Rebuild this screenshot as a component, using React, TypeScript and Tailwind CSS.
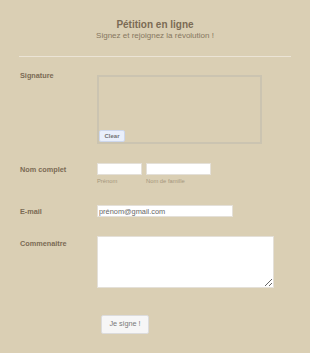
import React from 'react';

function Label({ children, className = '' }: { children: React.ReactNode; className?: string }) {
  return (
    <div className={`w-[77px] shrink-0 text-[7.3px] font-bold leading-[9px] text-[#7b6b55] ${className}`}>
      {children}
    </div>
  );
}

export default function App() {
  return (
    <div className="min-h-screen bg-[#dacfb4] font-['Liberation_Sans',Arial,sans-serif]">
      {/* Header */}
      <div className="pt-[19px] text-center">
        <h1 className="text-[10px] font-bold leading-[12px] text-[#7b6b55]">Pétition en ligne</h1>
        <p className="text-[8px] leading-[10px] text-[#86775f]">Signez et rejoignez la révolution !</p>
      </div>
      <div className="mx-[19px] mt-[15px] h-px bg-[#ebe4d6]" />

      <div className="px-[20px]">
        {/* Signature */}
        <div className="mt-[14px] flex items-start">
          <Label>Signature</Label>
          <div className="relative mt-[4px] h-[69px] w-[165px] border-2 border-[#cbc4b1]">
            <button className="absolute bottom-0 left-0 flex h-[12px] w-[26px] items-center justify-center rounded-[2px] border border-[#cdd7ec] bg-[#e9effb] text-[6px] font-semibold text-[#727272]">
              Clear
            </button>
          </div>
        </div>

        {/* Nom complet */}
        <div className="mt-[19px] flex items-start">
          <Label className="mt-[1.5px]">Nom complet</Label>
          <div className="flex gap-[4px]">
            <div>
              <input className="block h-[12px] w-[45px] border border-[#e4e0d8] bg-white" />
              <div className="mt-[2.5px] text-[5.8px] leading-[7px] text-[#a5967c]">Prénom</div>
            </div>
            <div>
              <input className="block h-[12px] w-[65px] border border-[#e4e0d8] bg-white" />
              <div className="mt-[2.5px] text-[5.8px] leading-[7px] text-[#a5967c]">Nom de famille</div>
            </div>
          </div>
        </div>

        {/* E-mail */}
        <div className="mt-[20.5px] flex items-start">
          <Label className="mt-[1.5px]">E-mail</Label>
          <input
            defaultValue="prénom@gmail.com"
            className="block h-[12px] w-[136px] border border-[#e4e0d8] bg-white px-[1px] text-[7.4px] leading-[10px] text-[#666] outline-none"
          />
        </div>

        {/* Commenaitre */}
        <div className="mt-[19px] flex items-start">
          <Label className="mt-[2.5px]">Commenaitre</Label>
          <textarea className="block h-[52px] w-[177px] resize border border-[#e4e0d8] bg-white outline-none" />
        </div>

        {/* Submit */}
        <div className="mt-[27px] pl-[81px]">
          <button className="flex h-[19px] w-[48px] items-center justify-center rounded-[2px] border border-[#dcdcdc] bg-[#f6f6f6] text-[7.3px] text-[#787878]">
            Je signe !
          </button>
        </div>
      </div>
    </div>
  );
}
